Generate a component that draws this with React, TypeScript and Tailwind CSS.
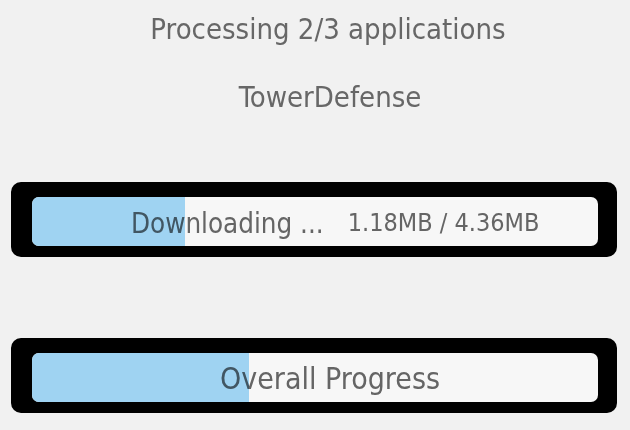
import React from "react";

function Bar({ fill, children, pad }: { fill: number; children: React.ReactNode; pad: string }) {
  return (
    <div className="ml-[11px] w-[606px] h-[75px] bg-black rounded-[10px] border-black border-t-[15px] border-l-[21px] border-r-[19px] border-b-[11px] box-border">
      <div className="relative w-full h-full rounded-[7px] bg-[#f7f7f7] overflow-hidden">
        <div className="absolute left-0 top-0 bottom-0 bg-[#9fd3f2]" style={{ width: `${fill}px` }} />
        <div className={`relative h-full flex items-center pt-[3px] ${pad} text-[#686868] mix-blend-multiply whitespace-nowrap`}>
          {children}
        </div>
      </div>
    </div>
  );
}

export default function App() {
  return (
    <div
      className="w-[630px] h-[430px] bg-[#f1f1f1] overflow-hidden flex flex-col font-stretch-condensed"
      style={{ fontFamily: "'DejaVu Sans Condensed', 'DejaVu Sans', sans-serif" }}
    >
      <div className="mt-[14px] h-[30px] leading-[30px] text-[29px] text-[#676767] text-center pl-[26px]">
        Processing 2/3 applications
      </div>
      <div className="mt-[38px] h-[30px] leading-[30px] text-[29px] text-[#676767] text-center pl-[30px]">
        TowerDefense
      </div>
      <div className="mt-[70px]">
        <Bar fill={153} pad="pl-[99px]">
          <span className="text-[27.5px] leading-[30px]">Downloading ...</span>
          <span className="ml-[24px] text-[25px] leading-[30px]">1.18MB / 4.36MB</span>
        </Bar>
      </div>
      <div className="mt-[81px]">
        <Bar fill={217} pad="pl-[188px]">
          <span className="text-[30px] leading-[30px]">Overall Progress</span>
        </Bar>
      </div>
    </div>
  );
}
